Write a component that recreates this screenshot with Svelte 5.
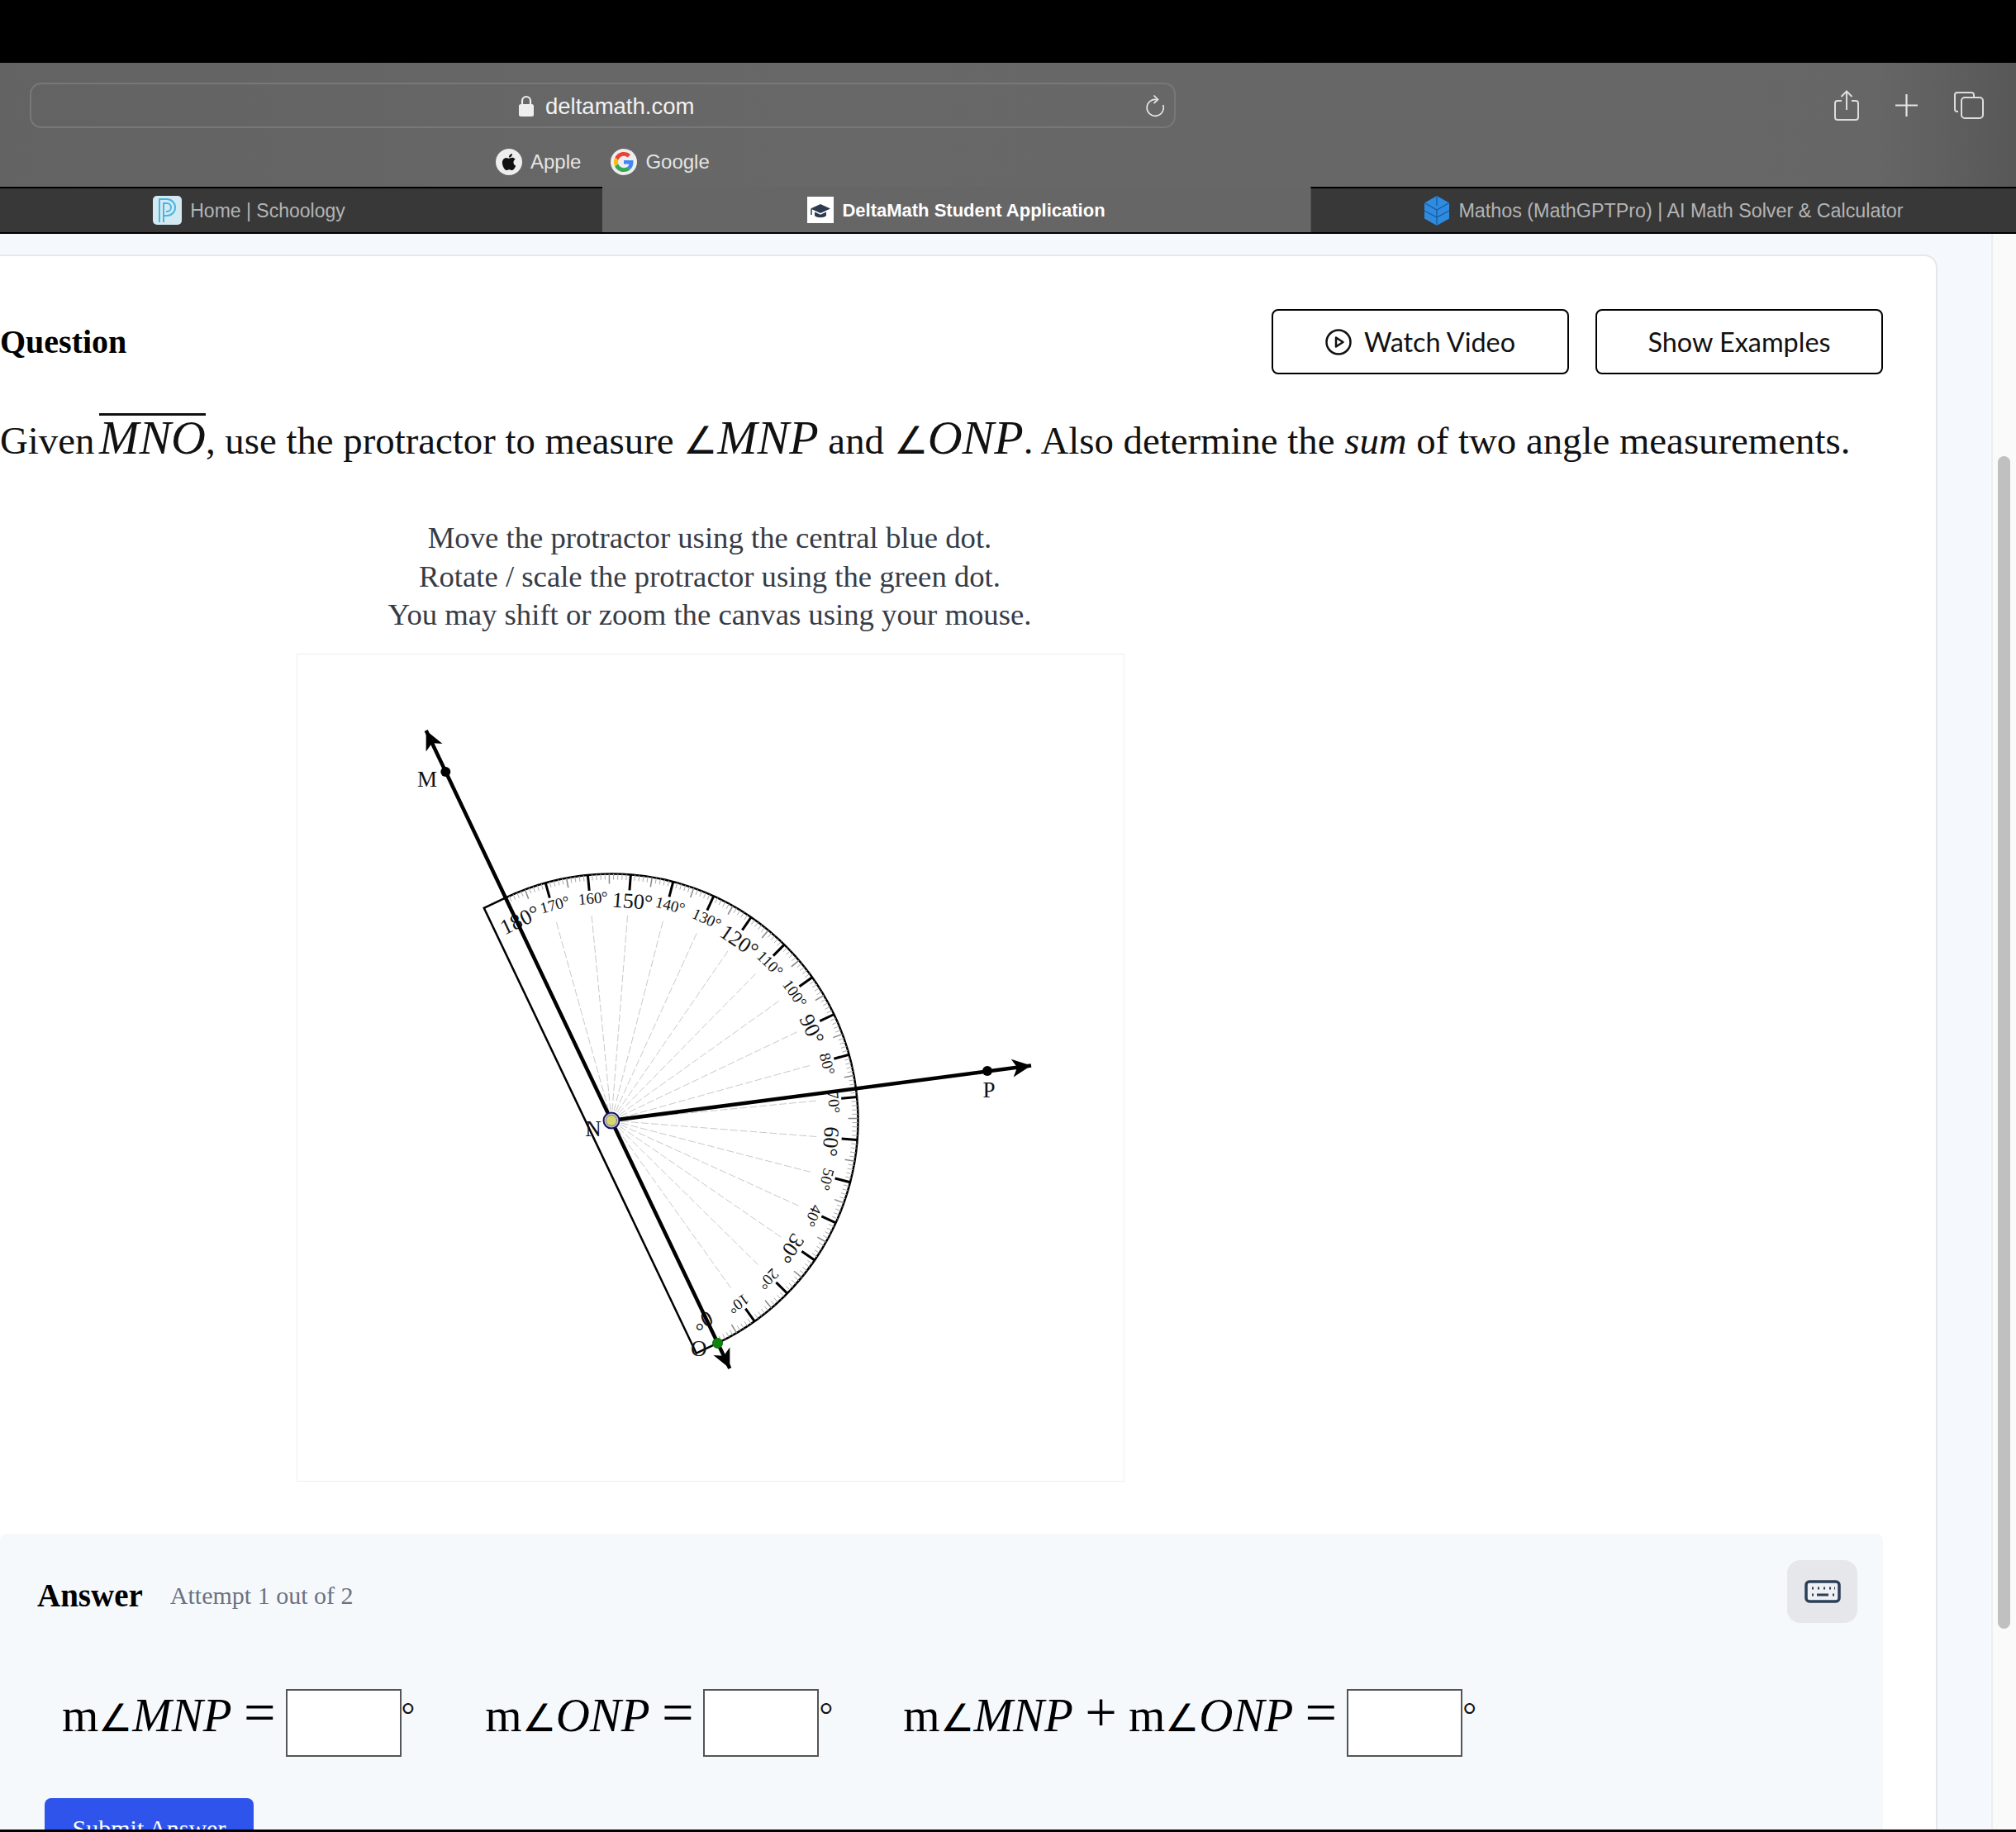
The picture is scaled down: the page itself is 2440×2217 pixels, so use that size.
<script>
    // protractor geometry, in canvas coordinates (canvas is 1000 x 1000)
    const cx = 380;
    const cy = 564;
    const radius = 298.5;
    const zeroAngle = 64.5;

    function polar(deg, r) {
        const t = (zeroAngle - deg) * Math.PI / 180;
        return { x: cx + r * Math.cos(t), y: cy + r * Math.sin(t) };
    }

    const ticks = [];
    for (let a = 0; a <= 180; a++) {
        let len = 7;
        let kind = 'small';
        if (a % 10 === 0) {
            len = 19;
            kind = 'major';
        } else if (a % 5 === 0) {
            len = 12;
            kind = 'mid';
        }
        const p1 = polar(a, radius);
        const p2 = polar(a, radius - len);
        ticks.push({ p1, p2, kind });
    }

    const spokes = [];
    const labels = [];
    for (let a = 0; a <= 180; a += 10) {
        if (a > 0 && a < 180) spokes.push(polar(a, 250));
        const big = a % 30 === 0;
        const p = polar(a - (big ? 1 : 0.8), big ? 264 : 268);
        labels.push({ a, big, x: p.x, y: p.y, rot: zeroAngle - a + 90 });
    }

    const start = polar(0, radius);
    const end = polar(180, radius);
    const nx = -0.902 * 28.5;
    const ny = 0.431 * 28.5;
    const outline = `M ${start.x} ${start.y} L ${start.x + nx} ${start.y + ny} L ${end.x + nx} ${end.y + ny} L ${end.x} ${end.y} A ${radius} ${radius} 0 0 1 ${start.x} ${start.y}`;

    function arrow(tx, ty) {
        const dx = tx - cx;
        const dy = ty - cy;
        const l = Math.hypot(dx, dy);
        const ux = dx / l;
        const uy = dy / l;
        const pt = (back, side) => `${tx - ux * back - uy * side},${ty - uy * back + ux * side}`;
        return `${tx},${ty} ${pt(23, 11)} ${pt(17, 0)} ${pt(23, -11)}`;
    }

    const rays = [
        { x: 155.7, y: 92 },
        { x: 523.3, y: 864 },
        { x: 888, y: 497.6 }
    ];

    const points = [
        { x: 179.3, y: 142, name: 'M', lx: 157, ly: 154 },
        { x: 835, y: 504, name: 'P', lx: 837, ly: 530 },
        { x: 358, y: 583.5, name: 'N', lx: 358, ly: 577 },
        { x: 485.7, y: 850, name: 'O', lx: 485.7, ly: 843 }
    ];
</script>

<div class="page">
    <div class="blackbar"></div>

    <header class="chrome">
        <div class="addr-row">
            <div class="addr">
                <svg class="lock" viewBox="0 0 20 26" width="20" height="26">
                    <path d="M5 12V7a5 5 0 0 1 10 0v5" fill="none" stroke="#eee" stroke-width="2.2"/>
                    <rect x="1" y="11" width="18" height="15" rx="2.5" fill="#eee"/>
                </svg>
                <span class="host">deltamath.com</span>
                <svg class="reload" viewBox="0 0 24 28" width="24" height="28">
                    <path d="M14 6.5A10 10 0 1 0 21.6 13" fill="none" stroke="#e6e6e6" stroke-width="1.7"/>
                    <path d="M10.5 1.5 15.5 6.5 10.5 11" fill="none" stroke="#e6e6e6" stroke-width="1.7"/>
                </svg>
            </div>
            <div class="actions">
                <svg viewBox="0 0 30 37" width="30" height="37">
                    <path d="M9 13H4a3 3 0 0 0-3 3v17a3 3 0 0 0 3 3h22a3 3 0 0 0 3-3V16a3 3 0 0 0-3-3h-5" fill="none" stroke="#dcdcdc" stroke-width="2"/>
                    <path d="M15 24V2M8.5 8 15 1.5 21.5 8" fill="none" stroke="#dcdcdc" stroke-width="2"/>
                </svg>
                <svg viewBox="0 0 27 27" width="27" height="27">
                    <path d="M13.5 0v27M0 13.5h27" stroke="#e4e4e4" stroke-width="2.2"/>
                </svg>
                <svg viewBox="0 0 36 33" width="36" height="33">
                    <path d="M5 24H4a3 3 0 0 1-3-3V4a3 3 0 0 1 3-3h17a3 3 0 0 1 3 3v2" fill="none" stroke="#dcdcdc" stroke-width="2"/>
                    <rect x="9" y="7" width="26" height="25" rx="4" fill="none" stroke="#dcdcdc" stroke-width="2"/>
                </svg>
            </div>
        </div>

        <div class="bookmarks">
            <span class="mark">
                <span class="mark-icon">
                    <svg viewBox="0 0 24 24" width="20" height="20">
                        <path fill="#111" d="M12.152 6.896c-.948 0-2.415-1.078-3.96-1.04-2.04.027-3.91 1.183-4.961 3.014-2.117 3.675-.546 9.103 1.519 12.09 1.013 1.454 2.208 3.09 3.792 3.039 1.52-.065 2.09-.987 3.935-.987 1.831 0 2.35.987 3.96.948 1.637-.026 2.676-1.48 3.676-2.948 1.156-1.688 1.636-3.325 1.662-3.415-.039-.013-3.182-1.221-3.22-4.857-.026-3.04 2.48-4.494 2.597-4.559-1.429-2.09-3.623-2.324-4.39-2.376-2-.156-3.675 1.09-4.61 1.09zM15.53 3.83c.843-1.012 1.4-2.427 1.245-3.83-1.207.052-2.662.805-3.532 1.818-.78.896-1.454 2.338-1.273 3.714 1.338.104 2.715-.688 3.559-1.701"/>
                    </svg>
                </span>
                Apple
            </span>
            <span class="mark">
                <span class="mark-icon">
                    <svg viewBox="0 0 48 48" width="24" height="24">
                        <path fill="#EA4335" d="M24 9.5c3.54 0 6.71 1.22 9.21 3.6l6.85-6.85C35.9 2.38 30.47 0 24 0 14.62 0 6.51 5.38 2.56 13.22l7.98 6.19C12.43 13.72 17.74 9.5 24 9.5z"/>
                        <path fill="#4285F4" d="M46.98 24.55c0-1.57-.15-3.09-.38-4.55H24v9.02h12.94c-.58 2.96-2.26 5.48-4.78 7.18l7.73 6c4.51-4.18 7.09-10.36 7.09-17.65z"/>
                        <path fill="#FBBC05" d="M10.53 28.59c-.48-1.45-.76-2.99-.76-4.59s.27-3.14.76-4.59l-7.98-6.19C.92 16.46 0 20.12 0 24c0 3.88.92 7.54 2.56 10.78l7.97-6.19z"/>
                        <path fill="#34A853" d="M24 48c6.48 0 11.93-2.13 15.89-5.81l-7.73-6c-2.15 1.45-4.92 2.3-8.16 2.3-6.26 0-11.57-4.22-13.47-9.91l-7.98 6.19C6.51 42.62 14.62 48 24 48z"/>
                    </svg>
                </span>
                Google
            </span>
        </div>
    </header>

    <nav class="tabs">
        <div class="tab tab-first">
            <svg viewBox="0 0 35 35" width="35" height="35">
                <rect width="35" height="35" rx="5" fill="#d4eaf2"/>
                <path d="M8 32V4h9a10 10 0 0 1 0 20h-4" fill="none" stroke="#49b3e3" stroke-width="2"/>
                <path d="M13 32V9h4a5 5 0 0 1 0 10h-1" fill="none" stroke="#49b3e3" stroke-width="2"/>
            </svg>
            <span>Home | Schoology</span>
        </div>
        <div class="tab tab-active">
            <svg viewBox="0 0 32 32" width="32" height="32">
                <rect width="32" height="32" fill="#fff"/>
                <path d="M16 9 28 14.500 16 20 4 14.500z" fill="#2e3a4e"/>
                <path d="M9 18.500v4.500c3 3 11 3 14 0v-4.500l-7 3.200z" fill="#2e3a4e"/>
                <path d="M5 15v7" stroke="#2e3a4e" stroke-width="1.500"/>
            </svg>
            <span>DeltaMath Student Application</span>
        </div>
        <div class="tab tab-last">
            <svg viewBox="0 0 32 36" width="32" height="36">
                <path d="M16 0 31 8.500v19L16 36 1 27.500v-19z" fill="#2f8be0"/>
                <path d="M16 0v12M1 8.500 16 17 31 8.500M1 18l15 8 15-8M16 17v19" fill="none" stroke="#175a9e" stroke-width="1.200"/>
            </svg>
            <span>Mathos (MathGPTPro) | AI Math Solver &amp; Calculator</span>
        </div>
    </nav>

    <main class="main">
        <div class="content">
            <section class="card">
                <div class="head">
                    <h2>Question</h2>
                    <div class="btns">
                        <button class="outline watch">
                            <svg viewBox="0 0 32 32" width="32" height="32">
                                <circle cx="16" cy="16" r="14.500" fill="none" stroke="#111" stroke-width="2.500"/>
                                <path d="M13 10.500 21.500 16 13 21.500z" fill="none" stroke="#111" stroke-width="2.500" stroke-linejoin="round"/>
                            </svg>
                            Watch Video
                        </button>
                        <button class="outline examples">Show Examples</button>
                    </div>
                </div>

                <p class="prompt">Given <span class="m over">MNO</span>, use the protractor to measure <span class="m"><span class="ang">∠</span>MNP</span> and <span class="m"><span class="ang">∠</span>ONP</span>. Also determine the <i>sum</i> of two angle measurements.</p>

                <div class="help">
                    <div>Move the protractor using the central blue dot.</div>
                    <div>Rotate / scale the protractor using the green dot.</div>
                    <div>You may shift or zoom the canvas using your mouse.</div>
                </div>

                <svg class="canvas" viewBox="0 0 1000 1000" width="1000" height="1000">
                    <path d={outline} fill="none" stroke="#000" stroke-width="2.500"/>
                    {#each spokes as s}
                        <line x1={cx} y1={cy} x2={s.x} y2={s.y} stroke="#c9c9c9" stroke-width="1" stroke-dasharray="9 3"/>
                    {/each}
                    {#each ticks as t}
                        <line x1={t.p1.x} y1={t.p1.y} x2={t.p2.x} y2={t.p2.y} class={t.kind}/>
                    {/each}
                    {#each labels as l}
                        <text class={l.big ? 'tick-label big' : 'tick-label'} text-anchor="middle" dominant-baseline="middle" transform={`translate(${l.x} ${l.y}) rotate(${l.rot})`}>{l.a}°</text>
                    {/each}
                    {#each rays as r}
                        <line x1={cx} y1={cy} x2={r.x} y2={r.y} stroke="#000" stroke-width="4.500"/>
                        <polygon points={arrow(r.x, r.y)} fill="#000"/>
                    {/each}
                    <circle cx="179.300" cy="142" r="6" fill="#000"/>
                    <circle cx="835" cy="504" r="6" fill="#000"/>
                    {#each points as p}
                        <text class="pt-label" x={p.lx} y={p.ly} text-anchor="middle" dominant-baseline="middle">{p.name}</text>
                    {/each}
                    <circle cx={cx} cy={cy} r="9.500" fill="#c6c6e8" stroke="#15155c" stroke-width="2"/>
                    <circle cx={cx} cy={cy} r="6.500" fill="#d8d56d" stroke="#333" stroke-width="0.500"/>
                    <circle cx={start.x} cy={start.y} r="6" fill="#0b860b" stroke="#0a6a0a"/>
                </svg>

                <section class="answer">
                    <div class="answer-head">
                        <div class="answer-title">
                            <h3>Answer</h3>
                            <span class="attempt">Attempt 1 out of 2</span>
                        </div>
                        <button class="kbd" aria-label="keyboard">
                            <svg viewBox="0 0 44 28" width="44" height="28">
                                <rect x="2" y="2" width="40" height="24" rx="4" fill="#eef0f3" stroke="#2d3f57" stroke-width="3.500"/>
                                <path d="M9 10h2M16 10h2M23 10h2M30 10h2M36 10h1M9 18h2M15 18h14M34 18h2" stroke="#2d3f57" stroke-width="3"/>
                            </svg>
                        </button>
                    </div>

                    <div class="math-row">
                        <div class="eq">
                            <span class="expr">m<span class="ang">∠</span><i>MNP</i> <span class="op">=</span></span>
                            <input type="text"/>
                            <span class="deg">°</span>
                        </div>
                        <div class="eq">
                            <span class="expr">m<span class="ang">∠</span><i>ONP</i> <span class="op">=</span></span>
                            <input type="text"/>
                            <span class="deg">°</span>
                        </div>
                        <div class="eq">
                            <span class="expr">m<span class="ang">∠</span><i>MNP</i> <span class="op">+</span> m<span class="ang">∠</span><i>ONP</i> <span class="op">=</span></span>
                            <input type="text"/>
                            <span class="deg">°</span>
                        </div>
                    </div>

                    <button class="submit">Submit Answer</button>
                </section>
            </section>
        </div>
        <div class="scrolltrack">
            <div class="thumb"></div>
        </div>
    </main>

    <div class="bottomline"></div>
</div>

<style>
    :global(body) {
        margin: 0;
        overflow: hidden;
    }

    .page {
        width: 2440px;
        height: 2217px;
        display: flex;
        flex-direction: column;
        overflow: hidden;
        font-family: "Liberation Serif", serif;
        background: #f5f8fc;
    }

    .blackbar {
        height: 76px;
        flex: none;
        background: #000;
    }

    .chrome {
        height: 150px;
        flex: none;
        background: linear-gradient(90deg, #636363, #686868 40%, #666 93%, #585858 100%);
        font-family: "Liberation Sans", sans-serif;
    }

    .addr-row {
        display: flex;
        align-items: center;
        margin-top: 0;
        padding: 24px 39px 0 36px;
    }

    .addr {
        width: 1387px;
        height: 55px;
        box-sizing: border-box;
        border: 2px solid #787878;
        border-radius: 14px;
        display: flex;
        align-items: center;
        padding-left: 589px;
        color: #f2f2f2;
    }

    .lock {
        margin-right: 13px;
    }

    .host {
        font-size: 27.5px;
        padding-top: 2px;
    }

    .reload {
        margin-left: auto;
        margin-right: 11px;
    }

    .actions {
        margin-left: auto;
        display: flex;
        align-items: center;
        gap: 44px;
    }

    .bookmarks {
        display: flex;
        gap: 36px;
        margin-top: 25px;
        padding-left: 600px;
    }

    .mark {
        display: flex;
        align-items: center;
        gap: 10px;
        font-size: 24px;
        color: #e4e4e4;
    }

    .mark-icon {
        width: 32px;
        height: 32px;
        border-radius: 50%;
        background: #eee;
        display: flex;
        align-items: center;
        justify-content: center;
    }

    .tabs {
        display: flex;
        height: 57px;
        flex: none;
        box-sizing: border-box;
        border-bottom: 2px solid #000;
        font-family: "Liberation Sans", sans-serif;
        font-size: 23px;
    }

    .tab {
        display: flex;
        align-items: center;
        justify-content: center;
        gap: 10px;
        box-sizing: border-box;
        background: #383838;
        border-top: 2px solid #000;
        color: #b4b4b4;
    }

    .tab span {
        padding-top: 2px;
    }

    .tab-first {
        width: 729px;
        padding-right: 126px;
    }

    .tab-active {
        width: 857px;
        background: #666;
        border-top: none;
        color: #fff;
        font-weight: bold;
        font-size: 22px;
    }

    .tab-last {
        width: 854px;
        border-left: 1px solid #555;
        font-size: 23.3px;
    }

    .main {
        flex: 1;
        min-height: 0;
        display: flex;
        overflow: hidden;
    }

    .content {
        width: 2410px;
        flex: none;
        padding-top: 25px;
        box-sizing: border-box;
    }

    .card {
        width: 2405px;
        margin-left: -60px;
        box-sizing: border-box;
        padding: 64px 64px 0 58px;
        background: #fff;
        border: 2px solid #e5e7eb;
        border-bottom: none;
        border-radius: 16px 16px 0 0;
    }

    .head {
        display: flex;
        justify-content: space-between;
        align-items: center;
        height: 79px;
    }

    h2 {
        margin: 0;
        font-size: 40px;
        font-weight: bold;
        color: #000;
    }

    .btns {
        display: flex;
        gap: 32px;
    }

    .outline {
        height: 79px;
        box-sizing: border-box;
        border: 2px solid #000;
        border-radius: 8px;
        background: #fff;
        font-family: Lato, sans-serif;
        font-size: 32.4px;
        color: #111;
        display: flex;
        align-items: center;
        justify-content: center;
        gap: 15px;
        padding: 0;
    }

    .watch {
        width: 360px;
    }

    .examples {
        width: 348px;
    }

    .prompt {
        margin: 42px 0 0;
        font-size: 46.8px;
        line-height: 70px;
        color: #111;
        white-space: nowrap;
    }

    .m {
        font-style: italic;
        font-size: 58px;
    }

    .ang {
        font-style: normal;
        font-size: 0.8em;
    }

    .over {
        display: inline-block;
        line-height: 53px;
        margin-left: -6px;
        border-top: 3px solid #111;
    }

    .help {
        margin-top: 59px;
        width: 1718px;
        text-align: center;
        font-size: 36.7px;
        line-height: 46.500px;
        color: #363c46;
    }

    .canvas {
        display: block;
        margin: 24px 0 0 360px;
        outline: 1px solid #eeeeee;
    }

    .canvas .major {
        stroke: #000;
        stroke-width: 3;
    }

    .canvas .mid {
        stroke: #888;
        stroke-width: 1.500;
    }

    .canvas .small {
        stroke: #aaa;
        stroke-width: 1;
    }

    .tick-label {
        font-size: 19px;
        fill: #111;
    }

    .tick-label.big {
        font-size: 26px;
    }

    .pt-label {
        font-size: 27px;
        fill: #111;
    }

    .answer {
        margin-top: 64px;
        width: 2279px;
        box-sizing: border-box;
        padding: 32px 31px 0 45px;
        background: #f6f9fc;
        border-radius: 8px 8px 0 0;
    }

    .answer-head {
        display: flex;
        justify-content: space-between;
        align-items: center;
    }

    .answer-title {
        display: flex;
        align-items: center;
        gap: 33px;
        padding-top: 10px;
    }

    h3 {
        margin: 0;
        font-size: 39px;
        color: #000;
    }

    .attempt {
        font-size: 30px;
        color: #6b7280;
    }

    .kbd {
        width: 85px;
        height: 76px;
        border: none;
        border-radius: 16px;
        background: #e5e7eb;
        display: flex;
        align-items: center;
        justify-content: center;
        padding: 0;
    }

    .math-row {
        display: flex;
        gap: 85px;
        margin: 79px 0 0 30px;
    }

    .eq {
        display: flex;
        align-items: center;
        gap: 12px;
    }

    .expr {
        font-size: 57px;
        color: #000;
        white-space: nowrap;
        padding-bottom: 20px;
    }

    .op {
        font-size: 1.2em;
        line-height: 0;
    }

    input {
        width: 140px;
        height: 82px;
        box-sizing: border-box;
        border: 2px solid #555;
        background: #fff;
        padding: 0;
    }

    .deg {
        font-size: 42px;
        line-height: 40px;
        margin-left: -12px;
        align-self: flex-start;
        padding-top: 12px;
        color: #111;
    }

    .submit {
        display: block;
        margin: 48px 0 0 9px;
        width: 253px;
        padding: 20px 0;
        border: none;
        border-radius: 8px;
        background: #2f54eb;
        color: #fff;
        font-family: "Liberation Serif", serif;
        font-size: 30px;
    }

    .scrolltrack {
        width: 30px;
        flex: none;
        background: #fafafa;
        border-left: 2px solid #eceef0;
        box-sizing: border-box;
    }

    .thumb {
        width: 15px;
        height: 1419px;
        margin: 269px 0 0 6px;
        border-radius: 8px;
        background: #c0c0c0;
    }

    .bottomline {
        height: 3px;
        flex: none;
        background: #000;
    }
</style>
